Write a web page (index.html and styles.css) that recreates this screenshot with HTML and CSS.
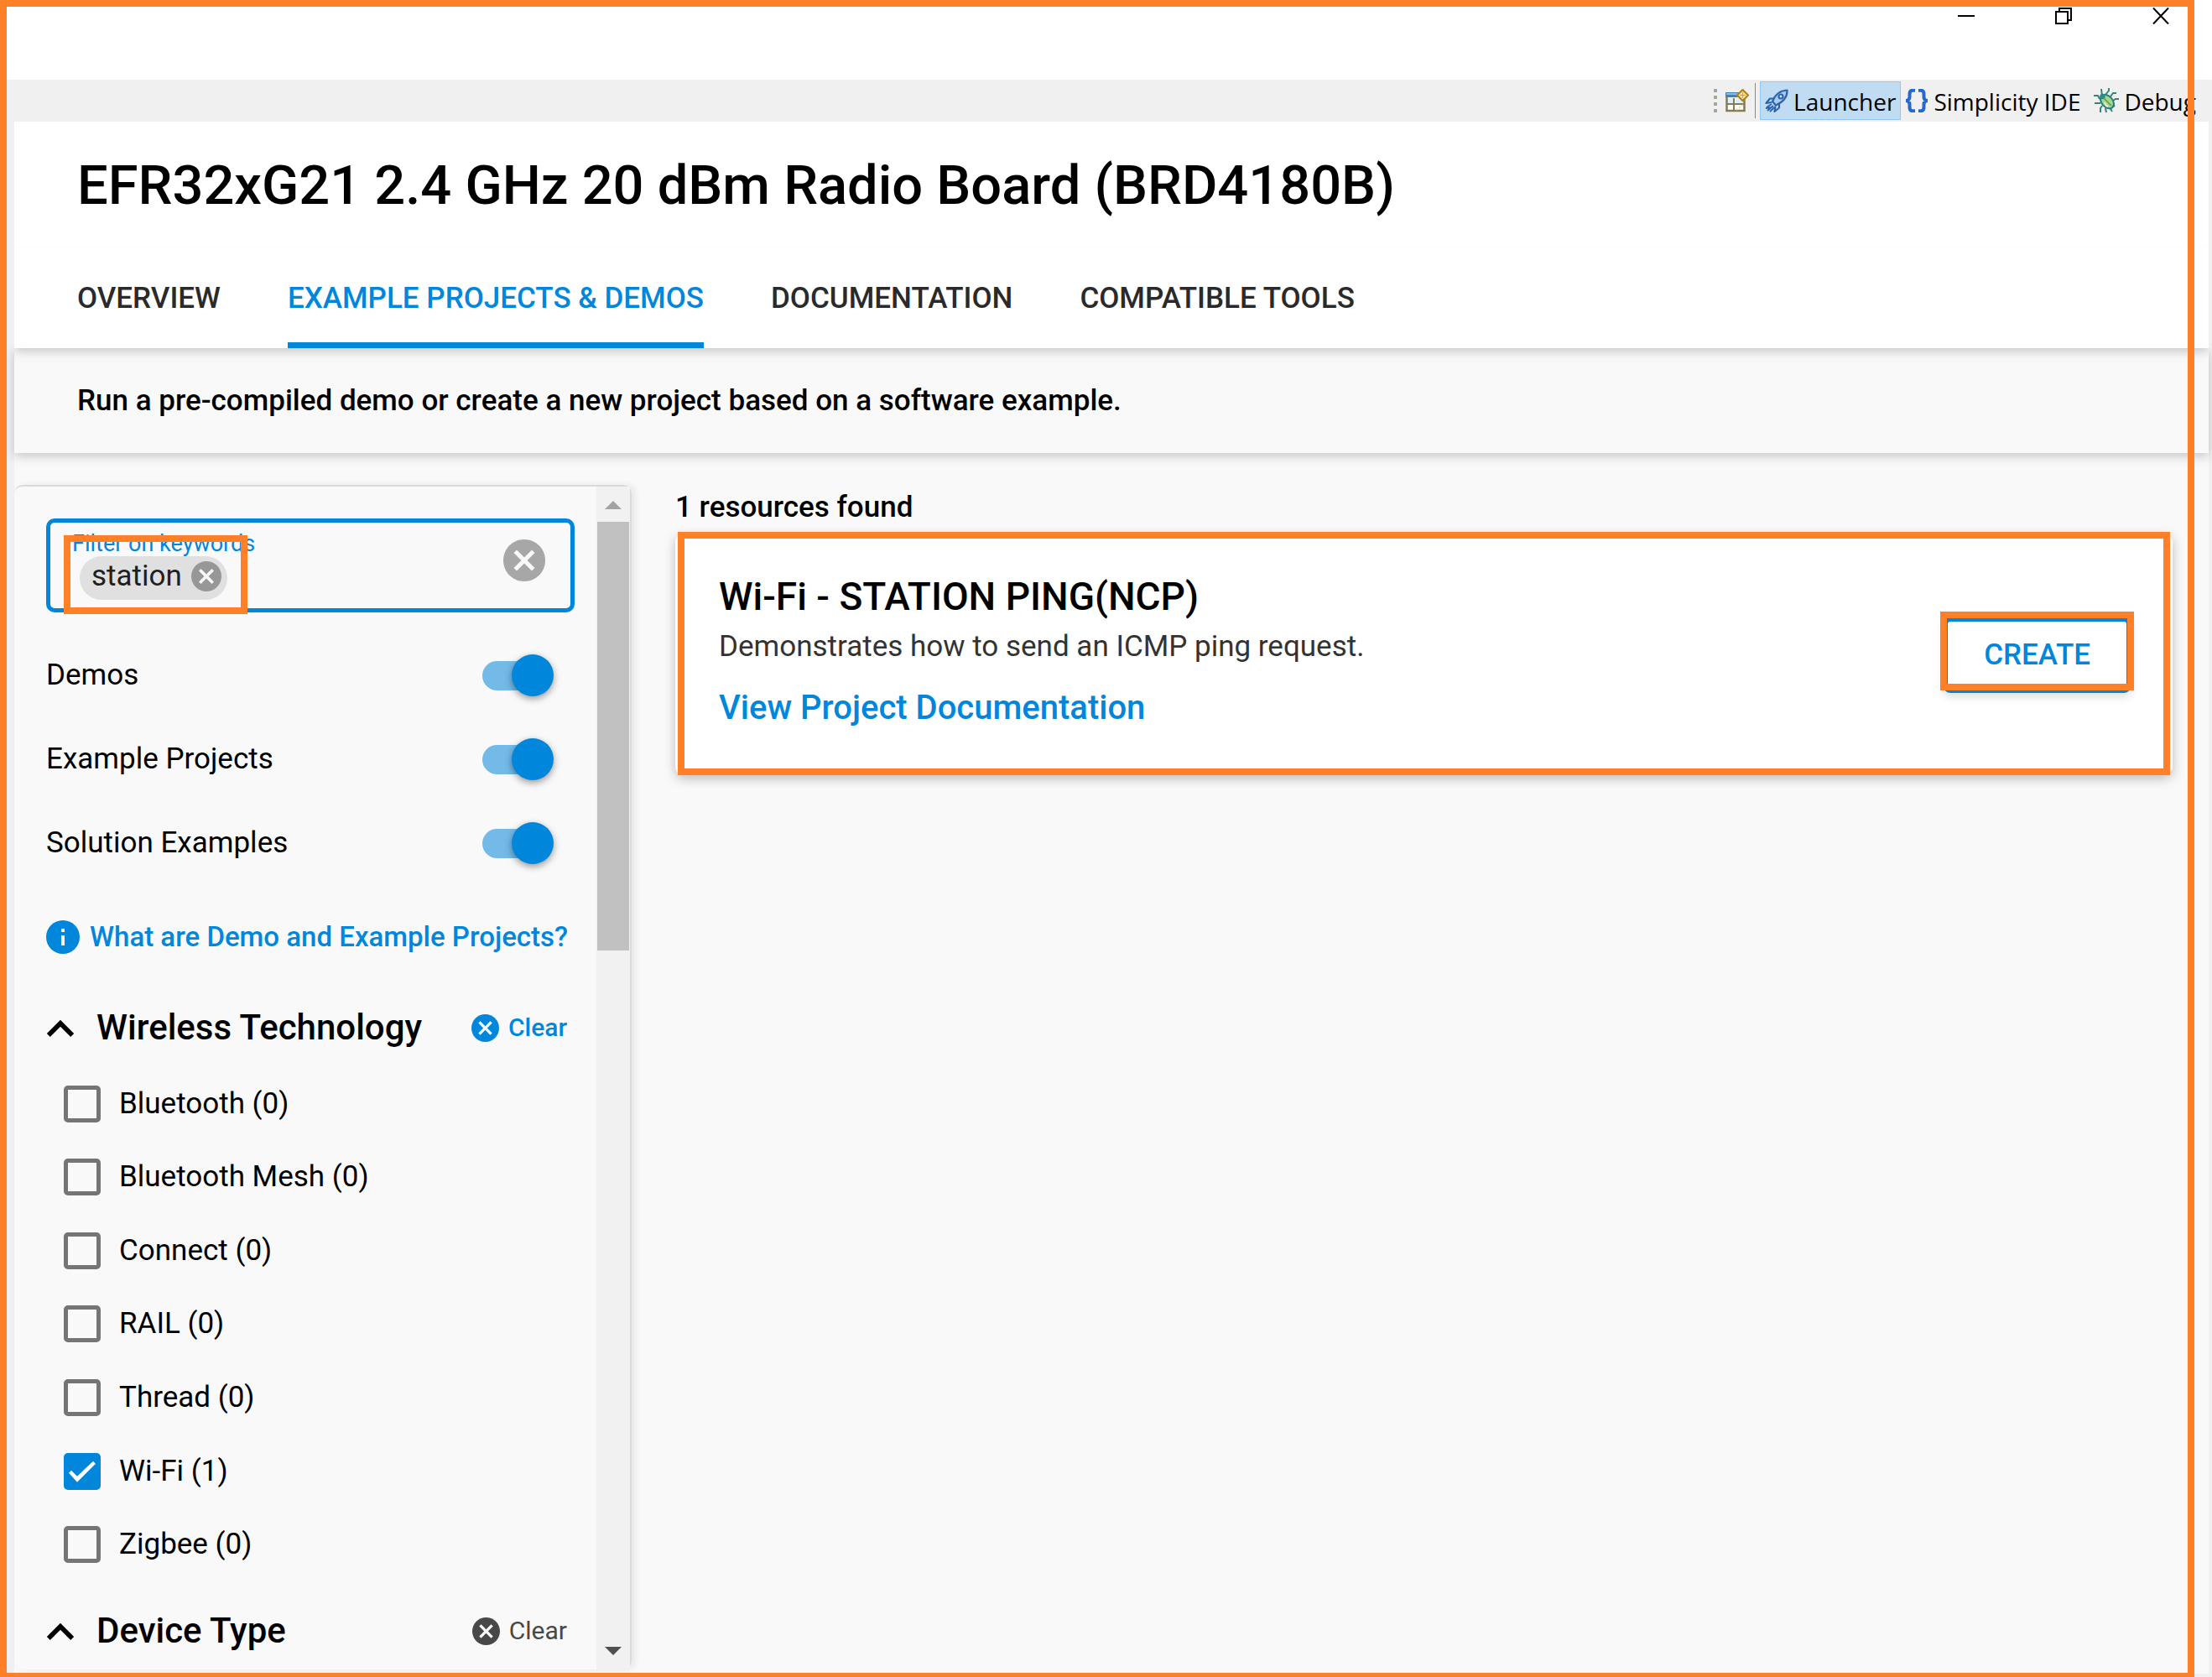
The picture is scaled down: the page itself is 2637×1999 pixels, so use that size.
FILE: index.html
```html
<!DOCTYPE html>
<html lang="en">
<head>
<meta charset="utf-8">
<title>Launcher</title>
<link rel="stylesheet" href="styles.css">
</head>
<body>
<svg class="sprite" aria-hidden="true">
  <symbol id="x-circle" viewBox="2 2 20 20"><path fill="currentColor" d="M12 2C6.47 2 2 6.47 2 12s4.47 10 10 10 10-4.47 10-10S17.53 2 12 2z"/><path class="x-mark" d="M17 15.590L15.590 17 12 13.410 8.410 17 7 15.590 10.590 12 7 8.410 8.410 7 12 10.590 15.590 7 17 8.410 13.410 12z"/></symbol>
  <symbol id="chevron" viewBox="0 0 30 20"><path d="M2.500 17.500L15 5l12.500 12.500" fill="none" stroke="currentColor" stroke-width="5"/></symbol>
</svg>

<div class="window">
  <header class="titlebar">
    <button class="win-btn" aria-label="Minimize"><svg viewBox="0 0 20 20"><path d="M0 10h20"/></svg></button>
    <button class="win-btn" aria-label="Restore"><svg viewBox="0 0 20 20"><path d="M1 5h14v14H1zM5 5V1h14v14h-4"/></svg></button>
    <button class="win-btn" aria-label="Close"><svg viewBox="0 0 20 20"><path d="M1 0.500l18 19M19 0.500l-18 19"/></svg></button>
  </header>

  <nav class="toolbar" aria-label="Perspectives">
    <span class="grip" aria-hidden="true"></span>
    <button class="tool open-perspective" aria-label="Open Perspective">
      <svg class="tool-icon" viewBox="0 0 28 28">
        <path d="M1.500 6h21v20h-21z" fill="#fff" stroke="#857b55" stroke-width="2.500"/>
        <path d="M0 4h20v6H0z" fill="#3f7fc4"/><path d="M1 5h18v2H1z" fill="#8bb8e6"/>
        <path d="M3 11h7v6H3zM12 11h9v6h-9z" fill="#d9effb"/>
        <path d="M10 11v15M2 18h20" stroke="#857b55" stroke-width="2"/>
        <path d="M13 25l8-6" stroke="#ead9a0" stroke-width="2" stroke-dasharray="2 2"/>
        <path d="M20.500 1L27 7.500 20.500 14 14 7.500z" fill="#fff3c4" stroke="#b08317" stroke-width="2.200"/>
        <path d="M20.500 4v7M17 7.500h7" stroke="#d6ab3a" stroke-width="1.500"/>
      </svg>
    </button>
    <span class="divider" aria-hidden="true"></span>
    <button class="tool active">
      <svg class="tool-icon" viewBox="0 0 28 28">
        <g fill="none" stroke="#2d62ae" stroke-width="2.200" stroke-linejoin="round">
          <path d="M9 15C12 7 17 2 26.500 1.500 27 10 21 16 13 19.500z" fill="#a9cdf0"/>
          <circle cx="19" cy="9" r="2.500" fill="#d4e8fa"/>
          <path d="M11 11.500H6L1.500 17l6.500-1M17 17.500v5L11.500 27l1-6.500"/>
          <path d="M8 18l-6 4M10 20l-7 6M8 22l-7 1M11 22l-5 5" stroke-width="1.800"/>
        </g>
      </svg><span>Launcher</span></button>
    <button class="tool">
      <svg class="tool-icon" viewBox="0 0 28 28"><path d="M12 1.800H9Q5.500 1.800 5.500 6v3.500Q5.500 14 1 14q4.500 0 4.500 4.500V22Q5.500 26.200 9 26.200h3M16 1.800h3Q22.500 1.800 22.500 6v3.500Q22.500 14 27 14q-4.500 0-4.500 4.500V22Q22.500 26.200 19 26.200h-3" fill="none" stroke="#2468d0" stroke-width="4"/></svg><span>Simplicity IDE</span></button>
    <button class="tool">
      <svg class="tool-icon bug" viewBox="0 0 30 30">
        <path d="M10 9L9 1M14 8l4-5V0M7 13L5 9H0M8 18H1M10 21l-2 3v5M14 24l1 5M19 23l3 5M22 19l3 3M23 15l3-2h4M20 10l3-4h4" fill="none" stroke="#3d8272" stroke-width="2"/>
        <ellipse cx="16" cy="16" rx="9.500" ry="6.500" transform="rotate(48 16 16)" fill="#a8d68f" stroke="#23807f" stroke-width="2"/>
        <circle cx="10.500" cy="10" r="3.200" fill="#2a8a8f"/>
        <path d="M12 12l9 9" stroke="#5f9e55" stroke-width="1.600"/>
        <path d="M13 17q1 4 4 5" stroke="#e3f5d5" stroke-width="2" fill="none"/>
      </svg><span>Debug</span></button>
  </nav>

  <div class="page">
    <div class="page-head">
      <h1>EFR32xG21 2.4 GHz 20 dBm Radio Board (BRD4180B)</h1>
      <nav class="tabs" aria-label="Sections">
        <a href="#overview">OVERVIEW</a>
        <a href="#examples" class="current" aria-current="page">EXAMPLE PROJECTS &amp; DEMOS</a>
        <a href="#documentation">DOCUMENTATION</a>
        <a href="#tools">COMPATIBLE TOOLS</a>
      </nav>
    </div>
    <p class="intro">Run a pre-compiled demo or create a new project based on a software example.</p>

    <div class="columns">
      <aside class="sidebar">
        <div class="filters">
          <div class="keyword-field">
            <div class="keyword-main">
              <label for="keywords">Filter on keywords</label>
              <div class="chips">
                <span class="chip">station<button aria-label="Remove station"><svg><use href="#x-circle"/></svg></button></span>
                <input id="keywords" type="text">
              </div>
            </div>
            <button class="clear-keywords" aria-label="Clear keywords"><svg><use href="#x-circle"/></svg></button>
          </div>

          <div class="switches">
            <label>Demos<input type="checkbox" role="switch" checked></label>
            <label>Example Projects<input type="checkbox" role="switch" checked></label>
            <label>Solution Examples<input type="checkbox" role="switch" checked></label>
          </div>

          <a class="help" href="#help"><svg viewBox="0 0 40 40"><circle cx="20" cy="20" r="20" fill="#0087dc"/><path d="M18 10h4v4h-4zM18 18h4v12h-4z" fill="#fff"/></svg>What are Demo and Example Projects?</a>

          <section class="group">
            <div class="group-head">
              <h2><button aria-expanded="true"><svg class="chevron"><use href="#chevron"/></svg>Wireless Technology</button></h2>
              <button class="clear on"><svg><use href="#x-circle"/></svg>Clear</button>
            </div>
            <ul class="options">
              <li><label><input type="checkbox">Bluetooth (0)</label></li>
              <li><label><input type="checkbox">Bluetooth Mesh (0)</label></li>
              <li><label><input type="checkbox">Connect (0)</label></li>
              <li><label><input type="checkbox">RAIL (0)</label></li>
              <li><label><input type="checkbox">Thread (0)</label></li>
              <li><label><input type="checkbox" checked>Wi-Fi (1)</label></li>
              <li><label><input type="checkbox">Zigbee (0)</label></li>
            </ul>
          </section>
          <section class="group">
            <div class="group-head">
              <h2><button aria-expanded="true"><svg class="chevron"><use href="#chevron"/></svg>Device Type</button></h2>
              <button class="clear"><svg><use href="#x-circle"/></svg>Clear</button>
            </div>
          </section>
        </div>
        <div class="scrollbar" aria-hidden="true">
          <span class="arrow up"></span><span class="thumb"></span><span class="arrow down"></span>
        </div>
      </aside>

      <main class="results">
        <p class="count">1 resources found</p>
        <article class="card">
          <div class="card-text">
            <h3>Wi-Fi - STATION PING(NCP)</h3>
            <p>Demonstrates how to send an ICMP ping request.</p>
            <a href="#project-documentation">View Project Documentation</a>
          </div>
          <button class="create">CREATE</button>
        </article>
      </main>
    </div>
  </div>
  <div class="frame" aria-hidden="true"></div>
</div>
</body>
</html>
```

FILE: styles.css
```css
:root {
  --blue: #0087dc;
  --mark: #ff8026;
  --panel: #f9f9f9;
}

* { box-sizing: border-box; }

body {
  margin: 0;
  background: #f0f0f0;
  color: #000;
  font: 400 35px/42px Roboto, sans-serif;
}

h1, h2, h3, p, ul { margin: 0; padding: 0; }
h1, h2, h3, p { font-weight: 500; }
ul { list-style: none; }
a { color: inherit; text-decoration: none; }
button { margin: 0; padding: 0; border: 0; background: none; color: inherit; font: inherit; }
svg { display: block; flex: none; }
.sprite { position: absolute; width: 0; height: 0; }
.x-mark { fill: #f9f9f9; }

.window {
  position: relative;
  display: flex;
  flex-direction: column;
  min-height: 100vh;
}

/* Highlight around the whole window */
.frame {
  position: absolute;
  z-index: 2;
  inset: 0 21px 0 0;
  border: 8px solid var(--mark);
  border-bottom-width: 5px;
  pointer-events: none;
}

/* Title bar */
.titlebar {
  display: flex;
  justify-content: flex-end;
  gap: 96px;
  height: 95px;
  padding: 9px 51px 0 0;
  background: #fff;
}
.win-btn { width: 20px; height: 20px; }
.win-btn svg { width: 20px; height: 20px; fill: none; stroke: #000; stroke-width: 2; }

/* Perspective toolbar */
.toolbar {
  display: flex;
  justify-content: flex-end;
  align-items: center;
  height: 50px;
  padding-right: 18px;
  font: 400 28px/38px "Open Sans", "Noto Sans", sans-serif;
}
.tool {
  display: flex;
  align-items: center;
  gap: 6px;
  height: 46px;
  margin-right: 6px;
  padding: 0 4px;
  border: 1px solid transparent;
  white-space: nowrap;
}
.tool span { padding-top: 2px; }
.tool:last-child { margin-right: 0; padding-right: 0; }
.tool.active { margin-right: 0; padding: 0 5px; background: #bfdcf3; border-color: #90c8f6; }
.tool-icon { width: 28px; height: 28px; }
.tool-icon.bug { width: 30px; height: 30px; }
.grip {
  width: 4px;
  height: 28px;
  margin-right: 5px;
  background: repeating-linear-gradient(#a8a49c 0 4px, transparent 4px 8px);
}
.divider { width: 1px; height: 42px; margin-right: 5px; background: #8a8a8a; }
.open-perspective { margin-right: 2px; }

/* Page */
.page {
  flex: 1;
  display: flex;
  flex-direction: column;
  margin: 0 4px 4px 17px;
  background: var(--panel);
}
.page-head {
  position: relative;
  z-index: 1;
  background: #fff;
  box-shadow: 0 4px 12px rgba(0, 0, 0, .2);
  clip-path: inset(0 0 -20px);
}
h1 {
  padding: 39px 75px 36px;
  border-bottom: 1px solid #fbfbfb;
  font-size: 65px;
  line-height: 74px;
}
.tabs {
  display: flex;
  gap: 80px;
  height: 120px;
  padding: 0 75px;
  color: #2a2a2a;
  font-weight: 500;
}
.tabs a { display: flex; align-items: center; padding-top: 9px; border-bottom: 7px solid transparent; }
.tabs .current { color: var(--blue); border-bottom-color: var(--blue); }
.intro {
  padding: 42px 75px 41px;
  box-shadow: 0 4px 12px rgba(0, 0, 0, .2);
}
.columns { flex: 1; display: flex; padding: 38px 0 5px; }

/* Sidebar */
.sidebar {
  display: flex;
  flex: none;
  width: 736px;
  border-top: 2px solid #d9d9d9;
  border-right: 2px solid #dcdcdc;
  border-radius: 10px;
  box-shadow: 4px 0 8px rgba(0, 0, 0, .08);
}
.filters { flex: 1; min-width: 0; padding: 38px 26px 15px 38px; }

.keyword-field {
  display: flex;
  align-items: center;
  justify-content: space-between;
  height: 112px;
  padding: 0 30px 0 26px;
  border: 5px solid var(--blue);
  border-radius: 10px;
}
.keyword-main { flex: 1; min-width: 0; }
.keyword-main > label { display: block; color: var(--blue); font-size: 27px; line-height: 30px; }
.chips { display: flex; padding-left: 9px; }
.chips input { flex: 1; min-width: 0; border: 0; outline: 0; background: none; font: inherit; }
.chip {
  position: relative;
  display: flex;
  align-items: center;
  gap: 11px;
  height: 52px;
  padding: 0 7px 4px 14px;
  border-radius: 26px;
  background: #e0e0e0;
  color: #1f1f1f;
}
.chip::after {
  content: "";
  position: absolute;
  inset: -25px -24px -17px -19px;
  border: 8px solid var(--mark);
  pointer-events: none;
}
.chip svg { width: 36px; height: 36px; color: #979797; }
.clear-keywords { margin-bottom: 12px; }
.clear-keywords svg { width: 50px; height: 50px; color: #a7a7a7; }

.switches { padding: 25px 40px 0 0; }
.switches label { display: flex; align-items: center; justify-content: space-between; height: 100px; }
.switches input {
  appearance: none;
  width: 70px;
  height: 35px;
  margin: 0;
  border-radius: 18px;
  background: #73bae9;
}
.switches input::before {
  content: "";
  display: block;
  width: 50px;
  height: 50px;
  margin: -8px 0 0 35px;
  border-radius: 50%;
  background: var(--blue);
  box-shadow: 0 3px 8px rgba(0, 0, 0, .4);
}

.help {
  display: flex;
  align-items: center;
  gap: 12px;
  height: 40px;
  margin-top: 42px;
  color: var(--blue);
  font-size: 33px;
  font-weight: 500;
  white-space: nowrap;
}
.help svg { width: 40px; height: 40px; }

.group { padding-top: 34px; }
.help + .group { padding-top: 63px; }
.group-head {
  display: flex;
  align-items: center;
  justify-content: space-between;
  height: 50px;
  padding-right: 9px;
}
.group-head h2 { font-size: 42px; line-height: 50px; }
.group-head h2 button { display: flex; align-items: center; gap: 26px; }
.chevron { width: 34px; height: 23px; }
.clear { display: flex; align-items: center; gap: 11px; color: #484848; font-size: 30px; }
.clear.on { color: var(--blue); font-weight: 500; }
.clear svg { width: 33px; height: 33px; }

.options {
  display: grid;
  grid-auto-rows: 1fr;
  min-height: 613px;
  margin-top: 22px;
  padding-left: 21px;
}
.options label { display: flex; align-items: center; gap: 22px; height: 100%; }
.options input {
  appearance: none;
  width: 44px;
  height: 44px;
  margin: 0;
  border: 5px solid #757575;
  border-radius: 5px;
}
.options input:checked { border: 0; background: var(--blue); }
.options input:checked::before {
  content: "";
  display: block;
  width: 44px;
  height: 44px;
  background: #fff;
  clip-path: polygon(6px 24px, 9px 21px, 16px 28px, 35px 10px, 38px 13px, 16px 35px);
}

.scrollbar {
  display: flex;
  flex-direction: column;
  align-items: center;
  width: 40px;
  background: #f1f1f1;
}
.arrow { border: 0 solid transparent; border-width: 0 10px; }
.arrow.up { margin: 17px 0 15px; border-bottom: 10px solid #a3a3a3; }
.arrow.down { margin: auto 0 17px; border-top: 10px solid #505050; }
.thumb { width: 38px; height: 511px; background: #c1c1c1; }

/* Results */
.results { flex: 1; padding: 6px 43px 0 52px; }
.count { margin-bottom: 10px; }
.card {
  position: relative;
  display: flex;
  align-items: center;
  justify-content: space-between;
  padding: 49px 50px 48px 52px;
  border-radius: 10px;
  background: #fff;
  box-shadow: 0 4px 14px rgba(0, 0, 0, .25);
}
.card-text { padding-bottom: 8px; }
.card h3 { font-size: 46px; line-height: 52px; }
.card p { margin: 13px 0 28px; color: #333; font-weight: 400; }
.card a { display: block; color: var(--blue); font-size: 40px; font-weight: 500; line-height: 48px; }
.create {
  position: relative;
  height: 90px;
  padding: 0 43px;
  border: 5px solid var(--blue);
  border-radius: 8px;
  color: var(--blue);
  font-weight: 500;
  box-shadow: 0 4px 12px rgba(0, 0, 0, .15);
}
.card::after, .create::after {
  content: "";
  position: absolute;
  border: 8px solid var(--mark);
  pointer-events: none;
}
.card::after { inset: -2px 3px 0; }
.create::after { inset: -12px -9px -2px; }
```
